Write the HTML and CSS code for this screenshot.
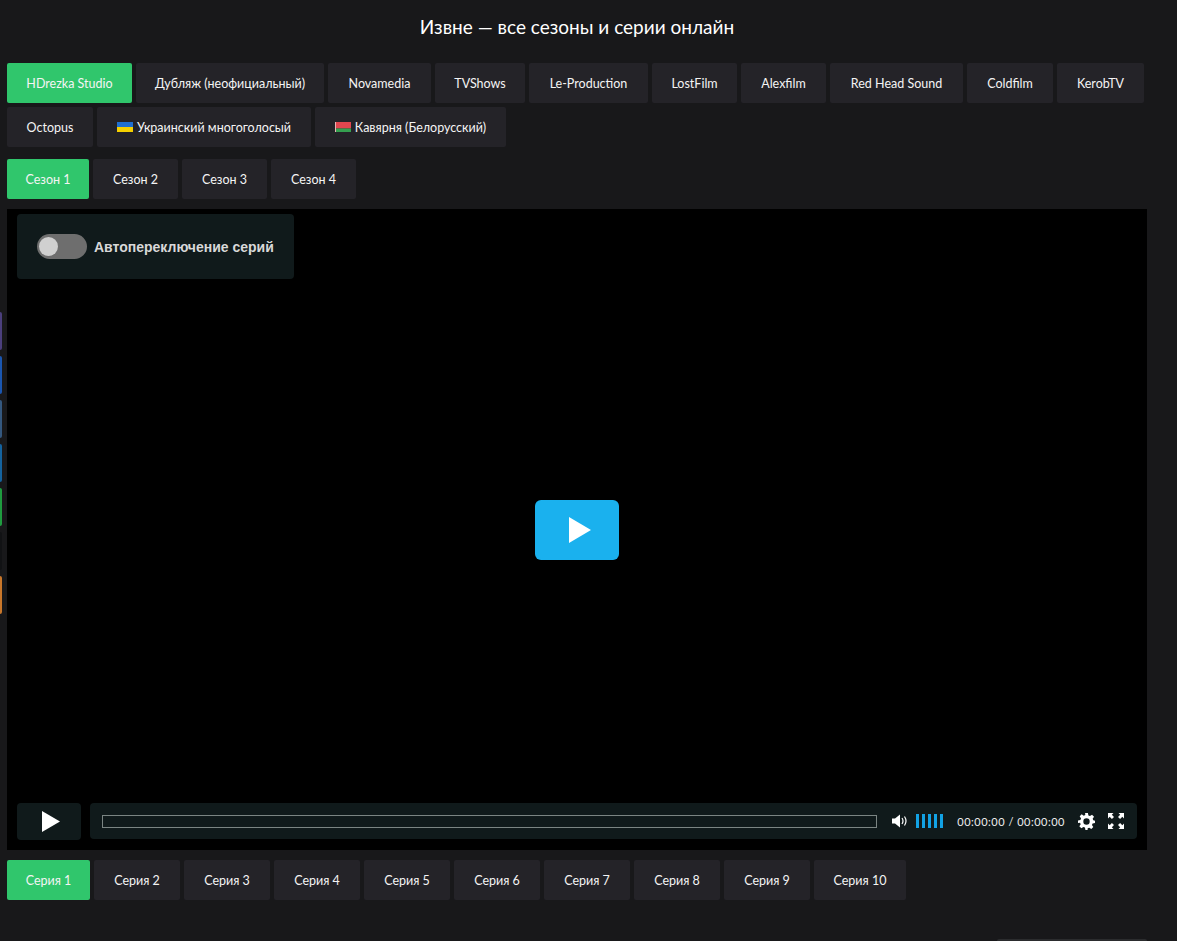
FILE: index.html
```html
<!DOCTYPE html>
<html>
<head>
  <title>Извне - все сезоны и серии онлайн</title>
  <link rel="stylesheet" href="styles.css">
</head>
<body>
  <div class="side-links">
    <span class="side-link purple"></span>
    <span class="side-link blue"></span>
    <span class="side-link steel"></span>
    <span class="side-link sky"></span>
    <span class="side-link green"></span>
    <span class="side-link dark"></span>
    <span class="side-link orange"></span>
  </div>

  <div class="page">
    <h1 class="title">Извне — все сезоны и серии онлайн</h1>

    <div class="tabs translators">
      <a class="tab active">HDrezka Studio</a>
      <a class="tab">Дубляж (неофициальный)</a>
      <a class="tab">Novamedia</a>
      <a class="tab">TVShows</a>
      <a class="tab">Le-Production</a>
      <a class="tab">LostFilm</a>
      <a class="tab">Alexfilm</a>
      <a class="tab">Red Head Sound</a>
      <a class="tab">Coldfilm</a>
      <a class="tab">KerobTV</a>
      <a class="tab">Octopus</a>
      <a class="tab">
        <svg class="flag" viewBox="0 0 16 10"><rect width="16" height="5" fill="#1f6fd0"/><rect y="5" width="16" height="5" fill="#f5d000"/></svg>
        Украинский многоголосый
      </a>
      <a class="tab">
        <svg class="flag" viewBox="0 0 16 10"><rect width="16" height="6.5" fill="#e0464f"/><rect y="6.5" width="16" height="3.5" fill="#35a050"/><rect width="1" height="10" fill="#e8b4b4"/></svg>
        Кавярня (Белорусский)
      </a>
    </div>

    <div class="tabs seasons">
      <a class="tab active">Сезон 1</a>
      <a class="tab">Сезон 2</a>
      <a class="tab">Сезон 3</a>
      <a class="tab">Сезон 4</a>
    </div>

    <div class="player">
      <div class="autoswitch">
        <span class="toggle"><span class="knob"></span></span>
        <span class="autoswitch-label">Автопереключение серий</span>
      </div>

      <div class="big-play">
        <svg width="22" height="26" viewBox="0 0 22 26"><path d="M0 0L22 13L0 26Z" fill="#fff"/></svg>
      </div>

      <div class="controls">
        <div class="play-btn">
          <svg width="18" height="21" viewBox="0 0 18 21"><path d="M0 0L18 10.5L0 21Z" fill="#fff"/></svg>
        </div>
        <div class="bar">
          <div class="progress"></div>
          <svg class="volume-icon" width="16" height="14" viewBox="0 0 16 14">
            <path d="M0 4.5H3L8 0.5V13.5L3 9.5H0Z" fill="#fff"/>
            <path d="M10 4Q12 7 10 10M12.5 2.5Q15.5 7 12.5 11.5" fill="none" stroke="#fff" stroke-width="1.2"/>
          </svg>
          <div class="volume">
            <span></span><span></span><span></span><span></span><span></span>
          </div>
          <span class="time">00:00:00 / 00:00:00</span>
          <svg class="gear" width="17" height="17" viewBox="0 0 24 24">
            <path fill="#fff" fill-rule="evenodd" d="M10 0h4l.7 3.4 2.2.9L19.8 2.4l2.8 2.8-1.9 2.9.9 2.2L24 11v3l-3.4.7-.9 2.2 1.9 2.9-2.8 2.8-2.9-1.9-2.2.9L13.5 24h-3l-.7-3.4-2.2-.9-2.9 1.9-2.8-2.8 1.9-2.9-.9-2.2L0 14v-3.5l3.4-.7.9-2.2L2.4 4.7l2.8-2.8 2.9 1.9 2.2-.9ZM12 7.5a4.5 4.5 0 1 0 0 9 4.5 4.5 0 0 0 0-9Z"/>
          </svg>
          <svg class="fullscreen" width="16" height="16" viewBox="0 0 16 16">
            <path fill="#fff" d="M0 0H5.5L3.8 1.7 6 3.9 3.9 6 1.7 3.8 0 5.5ZM16 0V5.5L14.3 3.8 12.1 6 10 3.9 12.2 1.7 10.5 0ZM0 16V10.5L1.7 12.2 3.9 10 6 12.1 3.8 14.3 5.5 16ZM16 16H10.5L12.2 14.3 10 12.1 12.1 10 14.3 12.2 16 10.5Z"/>
          </svg>
        </div>
      </div>
    </div>

    <div class="tabs episodes">
      <a class="tab active">Серия 1</a>
      <a class="tab">Серия 2</a>
      <a class="tab">Серия 3</a>
      <a class="tab">Серия 4</a>
      <a class="tab">Серия 5</a>
      <a class="tab">Серия 6</a>
      <a class="tab">Серия 7</a>
      <a class="tab">Серия 8</a>
      <a class="tab">Серия 9</a>
      <a class="tab">Серия 10</a>
    </div>
  </div>

  <div class="bottom-line"></div>
</body>
</html>
```

FILE: styles.css
```css
html, body {
  height: 100%;
}

body {
  margin: 0;
  background-color: #18181a;
  color: #fff;
  font-family: Lato, "Noto Sans", Arial, sans-serif;
  overflow: hidden;
  position: relative;
}

.page {
  width: 1140px;
  margin-left: 7px;
}

.title {
  margin: 0;
  height: 63px;
  padding-top: 16px;
  box-sizing: border-box;
  text-align: center;
  font-size: 19px;
  font-weight: 400;
  line-height: 21px;
}

.tabs {
  display: flex;
  flex-wrap: wrap;
  gap: 4px;
}

.tab {
  display: flex;
  align-items: center;
  justify-content: center;
  gap: 4px;
  height: 40px;
  width: 86px;
  background-color: #242328;
  color: #f4f4f4;
  font-size: 12.5px;
  border-radius: 2px;
  white-space: nowrap;
}

.tab.active {
  background-color: #30c66c;
}

/* tab widths, the font on the real page is a bit different */
.translators .tab:nth-child(1) { width: 125px; }
.translators .tab:nth-child(2) { width: 188px; }
.translators .tab:nth-child(3) { width: 103px; }
.translators .tab:nth-child(4) { width: 90px; }
.translators .tab:nth-child(5) { width: 119px; }
.translators .tab:nth-child(6) { width: 85px; }
.translators .tab:nth-child(7) { width: 85px; }
.translators .tab:nth-child(8) { width: 133px; }
.translators .tab:nth-child(10) { width: 87px; }
.translators .tab:nth-child(12) { width: 214px; }
.translators .tab:nth-child(13) { width: 191px; }

.seasons .tab { width: 85px; }
.seasons .tab.active { width: 82px; }

.episodes .tab.active { width: 83px; }
.episodes .tab:last-child { width: 92px; }

.seasons {
  margin-top: 12px;
}

.flag {
  width: 16px;
  height: 10px;
}

.player {
  position: relative;
  height: 641px;
  margin-top: 10px;
  background-color: #000;
}

.autoswitch {
  position: absolute;
  left: 10px;
  top: 5px;
  width: 277px;
  height: 65px;
  display: flex;
  align-items: center;
  padding-left: 20px;
  box-sizing: border-box;
  background-color: #101a1b;
  border-radius: 4px;
}

.toggle {
  width: 50px;
  height: 25px;
  border-radius: 13px;
  background-color: #6e6e6e;
  display: flex;
  align-items: center;
  padding-left: 2px;
  box-sizing: border-box;
}

.knob {
  width: 19px;
  height: 19px;
  border-radius: 50%;
  background-color: #d0d0d0;
}

.autoswitch-label {
  margin-left: 7px;
  font-family: "Liberation Sans", Arial, sans-serif;
  font-size: 14px;
  font-weight: 700;
  color: #d8d8d8;
}

.big-play {
  position: absolute;
  left: 528px;
  top: 291px;
  width: 84px;
  height: 60px;
  display: flex;
  align-items: center;
  justify-content: center;
  background-color: #1ab1ee;
  border-radius: 6px;
}

.big-play svg {
  margin-left: 6px;
}

.controls {
  position: absolute;
  left: 10px;
  right: 10px;
  top: 594px;
  display: flex;
  gap: 9px;
}

.play-btn {
  width: 64px;
  height: 37px;
  display: flex;
  align-items: center;
  justify-content: center;
  background-color: #101a1b;
  border-radius: 4px;
}

.play-btn svg {
  margin-left: 3px;
}

.bar {
  flex: 1;
  height: 36px;
  display: flex;
  align-items: center;
  padding: 0 13px 0 12px;
  background-color: #101a1b;
  border-radius: 4px;
}

.progress {
  flex: 1;
  height: 13px;
  border: 1px solid #7b8583;
  box-sizing: border-box;
}

.volume-icon {
  margin-left: 15px;
}

.volume {
  display: flex;
  gap: 3px;
  margin-left: 8px;
}

.volume span {
  width: 3px;
  height: 14px;
  background-color: #12a2e4;
}

.time {
  margin-left: 14px;
  font-size: 11px;
  letter-spacing: 0.5px;
  color: #eee;
}

.gear {
  margin-left: 13px;
}

.fullscreen {
  margin-left: 13px;
}

.episodes {
  margin-top: 10px;
}

/* slivers of the social buttons, mostly off screen */
.side-links {
  position: absolute;
  left: 0;
  top: 312px;
  display: flex;
  flex-direction: column;
  gap: 6px;
}

.side-link {
  display: block;
  width: 2px;
  height: 38px;
  border-radius: 0 2px 2px 0;
}

.purple { background-color: #4b3f7d; }
.blue { background-color: #1a56b0; }
.steel { background-color: #34587f; }
.sky { background-color: #14639f; }
.green { background-color: #1f9c3f; }
.dark { background-color: #111214; }
.orange { background-color: #c9772a; }

.bottom-line {
  position: absolute;
  left: 997px;
  top: 939px;
  width: 150px;
  height: 2px;
  background-color: #2b2c2e;
  border-radius: 2px 2px 0 0;
}
```
